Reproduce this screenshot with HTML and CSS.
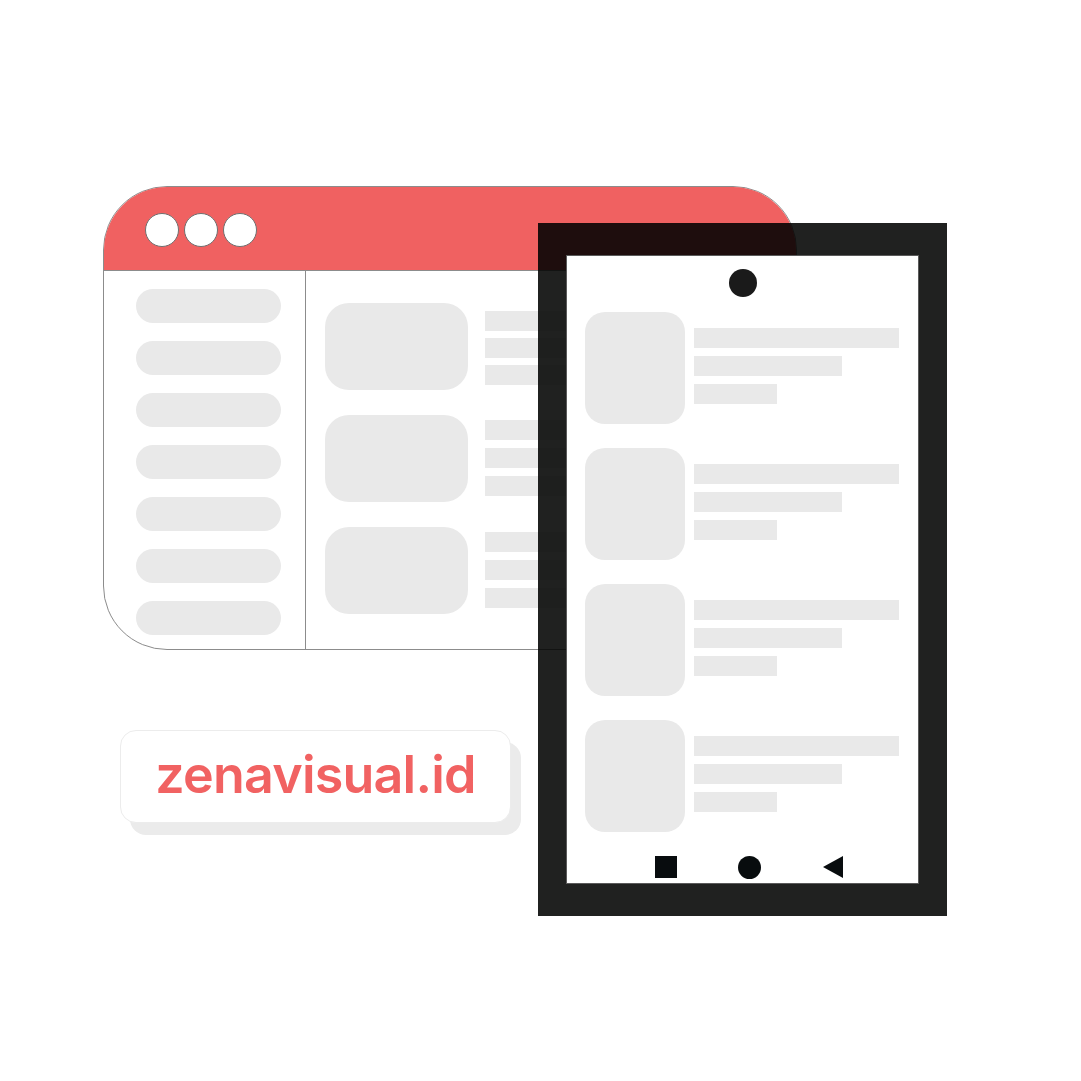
FILE: index.html
```html
<!DOCTYPE html>
<html lang="en">
<head>
<meta charset="utf-8">
<title>zenavisual.id</title>
<link rel="stylesheet" href="styles.css">
</head>
<body>
<div class="stage">
  <div class="browser">
    <div class="browser-header">
      <span class="dot"></span><span class="dot"></span><span class="dot"></span>
    </div>
    <div class="browser-body">
      <div class="sidebar">
        <span class="pill"></span><span class="pill"></span><span class="pill"></span>
        <span class="pill"></span><span class="pill"></span><span class="pill"></span>
        <span class="pill"></span>
      </div>
      <div class="content">
        <div class="row row-first">
          <div class="thumb"></div>
          <div class="lines"><span class="line"></span><span class="line"></span><span class="line"></span></div>
        </div>
        <div class="row">
          <div class="thumb"></div>
          <div class="lines"><span class="line"></span><span class="line"></span><span class="line"></span></div>
        </div>
        <div class="row">
          <div class="thumb"></div>
          <div class="lines"><span class="line"></span><span class="line"></span><span class="line"></span></div>
        </div>
      </div>
    </div>
  </div>

  <div class="phone">
    <div class="phone-frame"></div>
    <div class="phone-screen">
      <span class="camera"></span>
      <div class="feed">
        <div class="item">
          <div class="item-thumb"></div>
          <div class="item-lines"><span class="l1"></span><span class="l2"></span><span class="l3"></span></div>
        </div>
        <div class="item">
          <div class="item-thumb"></div>
          <div class="item-lines"><span class="l1"></span><span class="l2"></span><span class="l3"></span></div>
        </div>
        <div class="item">
          <div class="item-thumb"></div>
          <div class="item-lines"><span class="l1"></span><span class="l2"></span><span class="l3"></span></div>
        </div>
        <div class="item">
          <div class="item-thumb"></div>
          <div class="item-lines"><span class="l1"></span><span class="l2"></span><span class="l3"></span></div>
        </div>
      </div>
      <div class="nav">
        <span class="nav-square"></span>
        <span class="nav-circle"></span>
        <svg class="nav-back" width="20" height="22" viewBox="0 0 20 22"><polygon points="0,11 20,0 20,22" fill="#080c0e"/></svg>
      </div>
    </div>
  </div>

  <div class="label">zenavisual.id</div>
</div>
</body>
</html>
```

FILE: styles.css
```css
* { box-sizing: border-box; }
html, body { margin: 0; padding: 0; background: #ffffff; }

.stage {
  position: relative;
  width: 1081px;
  height: 1081px;
  overflow: hidden;
  background: #ffffff;
}

/* ---------- Browser window ---------- */
.browser {
  position: absolute;
  left: 103px;
  top: 186px;
  width: 694px;
  height: 464px;
  border: 1px solid #8c8c8c;
  border-radius: 64px 64px 0 64px;
  background: #ffffff;
  overflow: hidden;
  display: flex;
  flex-direction: column;
}

.browser-header {
  height: 84px;
  flex: none;
  background: #f06161;
  border-bottom: 1px solid #8c8c8c;
  display: flex;
  align-items: flex-start;
  gap: 5px;
  padding: 26px 0 0 41px;
}

.dot {
  width: 34px;
  height: 34px;
  border-radius: 50%;
  background: #ffffff;
  border: 1px solid #6f6f6f;
}

.browser-body {
  flex: 1;
  display: grid;
  grid-template-columns: 202px 1fr;
}

.sidebar {
  border-right: 1px solid #8c8c8c;
  display: flex;
  flex-direction: column;
  gap: 18px;
  padding: 18px 0 0 32px;
}

.pill {
  display: block;
  width: 145px;
  height: 34px;
  border-radius: 17px;
  background: #e9e9e9;
}

.content {
  display: flex;
  flex-direction: column;
  gap: 25px;
  padding: 32px 0 0 19px;
}

.row {
  display: flex;
  gap: 17px;
  align-items: flex-start;
}

.thumb {
  width: 143px;
  height: 87px;
  border-radius: 24px;
  background: #e9e9e9;
  flex: none;
}

.lines {
  display: flex;
  flex-direction: column;
  gap: 8px;
  padding-top: 5px;
}

.row-first .lines {
  padding-top: 8px;
  gap: 7px;
}

.line {
  display: block;
  width: 200px;
  height: 20px;
  background: #e9e9e9;
}

/* ---------- Phone ---------- */
.phone {
  position: absolute;
  left: 538px;
  top: 223px;
  width: 409px;
  height: 693px;
  padding: 32px 28px;
}

.phone-frame {
  position: absolute;
  inset: 0;
  background: #202120;
  mix-blend-mode: multiply;
}

.phone-screen {
  position: relative;
  height: 100%;
  background: #ffffff;
  border: 1px solid #5a5a5a;
  display: flex;
  flex-direction: column;
  align-items: stretch;
}

.camera {
  align-self: center;
  width: 28px;
  height: 28px;
  border-radius: 50%;
  background: #1a1a1a;
  margin-top: 13px;
}

.feed {
  display: flex;
  flex-direction: column;
  gap: 24px;
  margin-top: 15px;
  padding-left: 18px;
}

.item {
  display: flex;
  gap: 9px;
  align-items: flex-start;
}

.item-thumb {
  width: 100px;
  height: 112px;
  border-radius: 20px;
  background: #e9e9e9;
  flex: none;
}

.item-lines {
  display: flex;
  flex-direction: column;
  gap: 8px;
  padding-top: 16px;
}

.item-lines span {
  display: block;
  height: 20px;
  background: #e9e9e9;
}
.item-lines .l1 { width: 205px; }
.item-lines .l2 { width: 148px; }
.item-lines .l3 { width: 83px; }

.nav {
  margin-top: auto;
  display: flex;
  align-items: center;
  padding: 0 0 5px 88px;
  height: 27px;
}

.nav-square {
  width: 22px;
  height: 22px;
  background: #080c0e;
}

.nav-circle {
  width: 23px;
  height: 23px;
  border-radius: 50%;
  background: #080c0e;
  margin-left: 61px;
}

.nav-back {
  display: block;
  margin-left: 62px;
}

/* ---------- Label ---------- */
.label {
  position: absolute;
  left: 120px;
  top: 730px;
  width: 391px;
  height: 93px;
  border: 1px solid #ececec;
  border-radius: 16px;
  background: #ffffff;
  box-shadow: 10px 12px 0 0 #ebebeb;
  display: flex;
  align-items: center;
  justify-content: center;
  font-family: Inter, "Open Sans", sans-serif;
  font-weight: 600;
  font-size: 52px;
  letter-spacing: -0.8px;
  color: #f16262;
  padding-bottom: 4px;
}
```
